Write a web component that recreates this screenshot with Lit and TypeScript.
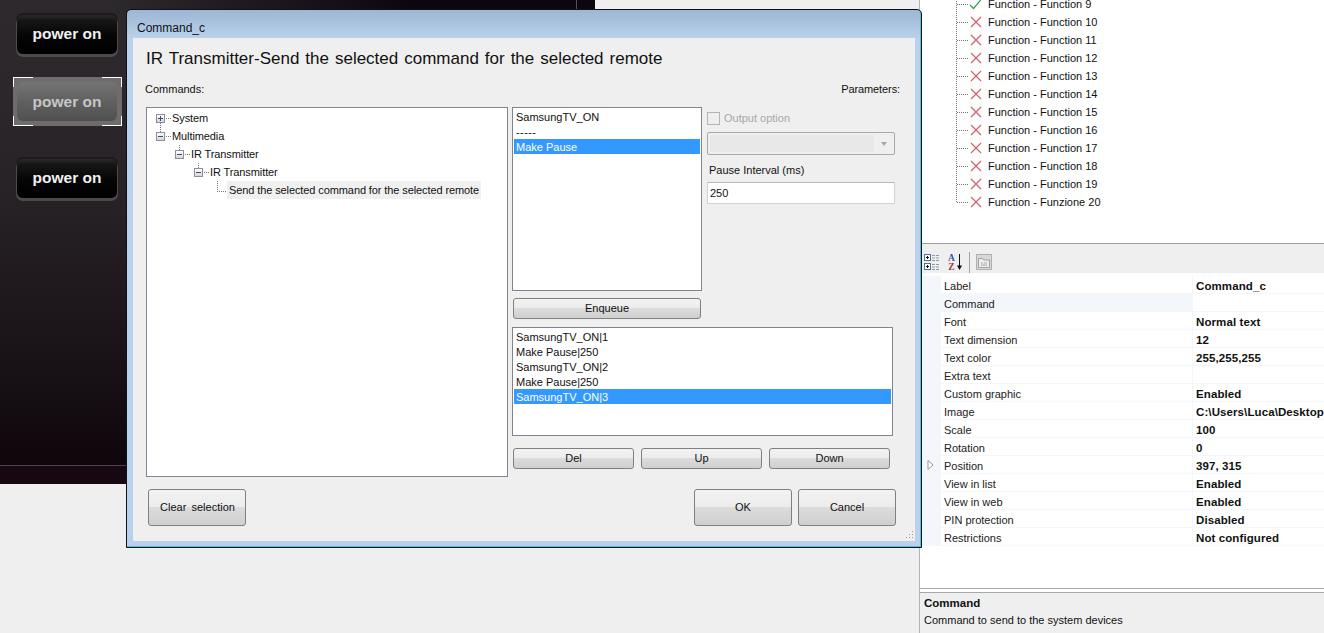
import { LitElement, html, css, svg } from "lit";
import { customElement } from "lit/decorators.js";

const FUNCS: [string, boolean][] = [
  ["Function - Function 9", true],
  ...Array.from({ length: 10 }, (_, i) => [`Function - Function ${i + 10}`, false] as [string, boolean]),
  ["Function - Funzione 20", false],
];

const PROPS: [string, string][] = [
  ["Label", "Command_c"], ["Command", ""], ["Font", "Normal text"], ["Text dimension", "12"],
  ["Text color", "255,255,255"], ["Extra text", ""], ["Custom graphic", "Enabled"],
  ["Image", "C:\\Users\\Luca\\Desktop"], ["Scale", "100"], ["Rotation", "0"], ["Position", "397, 315"],
  ["View in list", "Enabled"], ["View in web", "Enabled"], ["PIN protection", "Disabled"], ["Restrictions", "Not configured"],
];

const xIcon = svg`<svg width="14" height="14" viewBox="0 0 14 14"><path d="M2 2 12 12M12 2 2 12" stroke="#d2606c" stroke-width="1.2" fill="none"/></svg>`;
const checkIcon = svg`<svg width="14" height="14" viewBox="0 0 14 14"><path d="M1 8 4.5 11.5 12.5 2" stroke="#2e9e55" stroke-width="1.2" fill="none"/></svg>`;

@customElement("app-root")
export class AppRoot extends LitElement {
  static styles = css`
    :host { display: block; width: 1324px; height: 633px; position: relative; overflow: hidden; background: #efefef;
      font: 11px "Liberation Sans", Arial, sans-serif; color: #111; }
    .page { display: flex; height: 633px; }
    .work { width: 919px; flex: none; border-right: 1px solid #b4b4b4; }
    .canvas { width: 595px; height: 484px; position: relative; overflow: hidden;
      background:
        linear-gradient(90deg, transparent 18%, #0d0610 70%) top / 100% 12px no-repeat,
        linear-gradient(180deg, #2e292c 0, #2c272a 100px, #272225 200px, #1a1317 350px, #0e060b 465px, #170710 466px, #170710 100%); }
    .canvas::before { content: ""; position: absolute; left: 576px; top: 0; width: 1px; height: 100%; background: #55505a; }
    .canvas::after { content: ""; position: absolute; left: 0; top: 465px; width: 100%; height: 1px; background: #4a444a; }
    .pbtn { position: absolute; left: 17px; width: 100px; height: 39px; box-sizing: border-box; border-radius: 6px; padding-bottom: 1px;
      background: linear-gradient(180deg, #2a2a2a 0, #161616 14%, #050505 55%, #000 100%);
      box-shadow: 0 2px 0 1px #4e4a4c, 0 -1px 0 1px #1c1a1b;
      color: #f0f0f0; font: bold 15.5px "Liberation Sans", Arial, sans-serif; display: flex; align-items: center; justify-content: center; }
    .pwrap { position: absolute; left: 13px; top: 77px; width: 109px; height: 49px; box-sizing: border-box; background: #6e6c6d; padding: 5px 5px 5px 4px; }
    .pwrap .face { height: 39px; width: 100px; border-radius: 6px; box-sizing: border-box; display: flex; align-items: center; justify-content: center;
      background: linear-gradient(180deg, #747474 0, #606060 50%, #505050 100%); color: #c6c6c6; font: bold 15.5px "Liberation Sans", Arial, sans-serif; }
    .hd { position: absolute; width: 19px; height: 9px; border: 0 solid #fff; pointer-events: none; }
    .hd.nw { left: 0; top: 0; border-width: 1px 0 0 1px; }
    .hd.ne { right: 0; top: 0; border-width: 1px 1px 0 0; }
    .hd.sw { left: 0; bottom: 0; border-width: 0 0 1px 1px; }
    .hd.se { right: 0; bottom: 0; border-width: 0 1px 1px 0; }

    .right { flex: 1; min-width: 0; display: flex; flex-direction: column; background: #fff; }
    .ftree { height: 244px; flex: none; overflow: hidden; padding: 0 0 0 36px; box-sizing: border-box; border-bottom: 1px solid #a0a0a0; }
    .ftree-in { margin-top: -5px; border-left: 1px dotted #777; height: 207px; width: 300px; }
    .frow { height: 18px; display: flex; align-items: center; }
    .frow .dots { width: 11px; border-top: 1px dotted #777; margin-right: 1px; flex: none; }
    .frow svg { flex: none; margin-right: 5px; }
    .tools { height: 29px; flex: none; background: #efefef; display: flex; align-items: flex-start; padding: 10px 0 0 4px; box-sizing: border-box; }
    .tools .sep { width: 1px; height: 21px; background: #a4a4a4; margin: -2px 6px 0 5px; }
    .grid { flex: none; height: 315px; padding-top: 3px; box-sizing: border-box; }
    .prow { display: flex; height: 18px; box-sizing: border-box; }
    .prow .gut { width: 21px; flex: none; background: #f3f6fb; display: flex; align-items: center; justify-content: center; }
    .prow .nm { width: 251px; flex: none; padding-left: 3px; box-sizing: border-box; line-height: 20px; border-bottom: 1px solid #f3f6fb; color: #222; overflow: hidden; }
    .prow .val { flex: 1; border-left: 1px solid #f3f6fb; border-bottom: 1px solid #f3f6fb; padding-left: 3px; font-weight: bold; line-height: 20px; white-space: nowrap; color: #111; font-size: 11.5px; letter-spacing: .1px; overflow: hidden; }
    .prow.cur .nm { background: #f3f6fb; }
    .desc { flex: 1; border-top: 1px solid #a8a8a8; }
    .desc-in { margin-top: 3px; border-top: 1px solid #a8a8a8; background: #efefef; height: 100%; padding: 3px 4px; box-sizing: border-box; }
    .desc b { display: block; line-height: 14px; margin-bottom: 4px; font-size: 11.5px; }

    .dlg { position: absolute; left: 126px; top: 9px; width: 796px; height: 539px; box-sizing: border-box; border: 1px solid #111; border-radius: 5px 5px 0 0;
      background: linear-gradient(180deg, #9cb7d4 0, #b9d1ea 28px, #b9d1ea 100%); box-shadow: inset -1px -1px 0 0 #4fc0e8; padding: 0 6px 6px 6px; display: flex; flex-direction: column; }
    .dlg-t { height: 28px; flex: none; display: flex; align-items: center; padding: 7px 4px 0; font-size: 12px; box-sizing: border-box; color: #111; }
    .dlg-b { flex: 1; background: #efefef; padding: 0 19px 0 13px; position: relative; }
    h1 { margin: 0; font-weight: normal; font-size: 17px; line-height: 20px; padding-top: 11px; color: #111; word-spacing: 1.25px; }
    .caps { display: flex; justify-content: space-between; margin: 11px -4px 9px -1px; height: 18px; line-height: 18px; font-size: 11px; }
    .caps span:last-child { letter-spacing: -.1px; }
    .main { display: flex; gap: 4px; }
    .tree { width: 362px; height: 370px; flex: none; box-sizing: border-box; border: 1px solid #7f8490; background: #fff; padding-top: 1px; letter-spacing: -.1px; }
    .tr { height: 18px; display: flex; align-items: center; position: relative; white-space: nowrap; }
    .ex { width: 9px; height: 9px; box-sizing: border-box; border: 1px solid #8a8f99; background: linear-gradient(#fff, #d6d6d6); position: relative; flex: none; }
    .ex::before { content: ""; position: absolute; left: 1px; right: 1px; top: 3px; height: 1px; background: #3a4a80; }
    .ex.plus::after { content: ""; position: absolute; top: 1px; bottom: 1px; left: 3px; width: 1px; background: #3a4a80; }
    .d { width: 5px; margin: 0 1px; border-top: 1px dotted #777; flex: none; }
    .up { position: absolute; width: 0; top: 0; height: 5px; border-left: 1px dotted #777; }
    .up.sib { top: -4px; height: 9px; }
    .elbow { width: 9px; height: 11px; box-sizing: border-box; border-left: 1px dotted #777; border-bottom: 1px dotted #777; align-self: flex-start; flex: none; }
    .hl { background: #f0f0f0; line-height: 18px; padding: 0 2px; margin-left: 1px; }
    .side { width: 383px; flex: none; }
    .top { display: flex; gap: 5px; }
    .list { box-sizing: border-box; border: 1px solid #7f8490; background: #fff; padding: 1px; }
    .list div { height: 15px; line-height: 17px; padding-left: 2px; white-space: nowrap; overflow: hidden; }
    .list .on { background: #3399ff; color: #fff; }
    .list .dash { letter-spacing: .4px; }
    .cmds { width: 190px; height: 184px; }
    .params { width: 188px; }
    .opt { display: flex; align-items: center; gap: 4px; height: 14px; margin-top: 4px; color: #a8a8a8; }
    .opt i { width: 13px; height: 13px; box-sizing: border-box; border: 1px solid #b4b4b4; background: #efefef; flex: none; margin-top: 1px; }
    .opt span { margin-top: -1px; }
    .combo { height: 23px; box-sizing: border-box; border: 1px solid #a8a8a8; border-radius: 2px; margin-top: 7px; background: #efefef; padding: 2px; display: flex; align-items: stretch; }
    .combo u { display: block; width: 164px; background: #e8e8e8; }
    .combo s { display: block; margin: 7px 0 0 7px; width: 0; height: 0; border: 3.5px solid transparent; border-top: 4px solid #a8a8a8; }
    .lbl { margin: 8px 0 5px 2px; line-height: 14px; }
    .inp { height: 22px; box-sizing: border-box; border: 1px solid #d2d2d2; border-top-color: #b8b8b8; background: #fff; line-height: 20px; padding-left: 2px; }
    .btn { box-sizing: border-box; border: 1px solid #808080; border-radius: 3px; display: flex; align-items: center; justify-content: center; color: #111; padding-bottom: 1px;
      background: linear-gradient(180deg, #f2f2f2 0, #ececec 50%, #dcdcdc 50%, #cfcfcf 100%); }
    .enq { width: 188px; height: 21px; margin: 7px 0 8px 1px; }
    .queue { width: 381px; height: 109px; }
    .trio { display: flex; gap: 7px; margin: 12px 0 0 1px; }
    .trio .btn { width: 121px; height: 21px; }
    .foot { display: flex; margin-top: 12px; padding-left: 2px; gap: 6px; }
    .foot .btn { width: 98px; height: 37px; }
    .foot .sp { flex: 1; }
    .clear { word-spacing: 2px; padding-left: 1px; }
    .grip { position: absolute; right: 1px; bottom: 1px; }
  `;

  private treeRow(indent: number, label: string, plus: boolean, up: "" | "sib" | "near") {
    return html`<div class="tr" style="padding-left:${indent}px">
      ${up ? html`<span class="up ${up === "sib" ? "sib" : ""}" style="left:${indent + 4}px"></span>` : ""}
      <span class="ex ${plus ? "plus" : ""}"></span><span class="d"></span><span>${label}</span></div>`;
  }

  render() {
    return html`
      <div class="page">
        <div class="work">
          <div class="canvas">
            <div class="pbtn" style="top:15px">power on</div>
            <div class="pwrap"><div class="face">power on</div>
              <span class="hd nw"></span><span class="hd ne"></span><span class="hd sw"></span><span class="hd se"></span></div>
            <div class="pbtn" style="top:159px">power on</div>
          </div>
        </div>
        <div class="right">
          <div class="ftree"><div class="ftree-in">
            ${FUNCS.map(([t, ok]) => html`<div class="frow"><span class="dots"></span>${ok ? checkIcon : xIcon}<span>${t}</span></div>`)}
          </div></div>
          <div class="tools">
            <svg width="40" height="16" viewBox="0 0 40 16">
              <rect x=".5" y=".5" width="6" height="6" fill="#fff" stroke="#5a6f99"/><path d="M2 3.5h3M3.5 2v3" stroke="#113"/>
              <rect x=".5" y="9.5" width="6" height="6" fill="#fff" stroke="#5a6f99"/><path d="M2 12.5h3M3.5 11v3" stroke="#113"/>
              <path d="M8 1.5h8M8 4h8M8 6.5h8M8 10.5h8M8 13h8M8 15.5h8" stroke="#8f9aa8" stroke-dasharray="3 1"/>
              <text x="27.5" y="7" font-size="9.5" font-weight="bold" font-family="Liberation Serif" fill="#3355aa" text-anchor="middle">A</text>
              <text x="27.5" y="15.5" font-size="9.5" font-weight="bold" font-family="Liberation Serif" fill="#a83a3a" text-anchor="middle">Z</text>
              <path d="M35.5 0v13" stroke="#111"/><path d="M33 11.5h5L35.5 16z" fill="#111"/>
            </svg>
            <span class="sep"></span>
            <svg width="16" height="16" viewBox="0 0 16 16"><rect x=".5" y=".5" width="15" height="15" fill="#d8d8d8" stroke="#b0b0b0"/><path d="M2.5 4.5h4l1 1.5h6v7.5h-11z" fill="#eee" stroke="#a0a0a0"/><path d="M5 9h2M8 9h3M5 11h6" stroke="#aaa"/></svg>
          </div>
          <div class="grid">
            ${PROPS.map(([k, v], i) => html`<div class="prow ${i === 1 ? "cur" : ""}"><div class="gut">${k === "Position" ? html`<svg width="7" height="10" viewBox="0 0 7 10"><path d="M1 .5 6 5 1 9.5z" fill="#fff" stroke="#999"/></svg>` : ""}</div><div class="nm">${k}</div><div class="val">${v}</div></div>`)}
          </div>
          <div class="desc"><div class="desc-in"><b>Command</b>Command to send to the system devices</div></div>
        </div>
      </div>

      <div class="dlg">
        <div class="dlg-t">Command_c</div>
        <div class="dlg-b">
          <h1>IR Transmitter-Send the selected command for the selected remote</h1>
          <div class="caps"><span>Commands:</span><span>Parameters:</span></div>
          <div class="main">
            <div class="tree">
              ${this.treeRow(9, "System", true, "")}
              ${this.treeRow(9, "Multimedia", false, "sib")}
              ${this.treeRow(28, "IR Transmitter", false, "near")}
              ${this.treeRow(47, "IR Transmitter", false, "near")}
              <div class="tr" style="padding-left:70px"><span class="elbow"></span><span class="hl">Send the selected command for the selected remote</span></div>
            </div>
            <div class="side">
              <div class="top">
                <div class="list cmds"><div>SamsungTV_ON</div><div class="dash">-----</div><div class="on">Make Pause</div></div>
                <div class="params">
                  <div class="opt"><i></i><span>Output option</span></div>
                  <div class="combo"><u></u><s></s></div>
                  <div class="lbl">Pause Interval (ms)</div>
                  <div class="inp">250</div>
                </div>
              </div>
              <div class="btn enq">Enqueue</div>
              <div class="list queue">
                <div>SamsungTV_ON|1</div><div>Make Pause|250</div><div>SamsungTV_ON|2</div><div>Make Pause|250</div><div class="on">SamsungTV_ON|3</div>
              </div>
              <div class="trio"><div class="btn">Del</div><div class="btn">Up</div><div class="btn">Down</div></div>
            </div>
          </div>
          <div class="foot">
            <div class="btn clear">Clear selection</div><span class="sp"></span>
            <div class="btn">OK</div><div class="btn">Cancel</div>
          </div>
          <svg class="grip" width="10" height="10" viewBox="0 0 10 10"><path d="M8 1h1v1H8zM5 4h1v1H5zM8 4h1v1H8zM2 7h1v1H2zM5 7h1v1H5zM8 7h1v1H8z" fill="#9a9a9a"/></svg>
        </div>
      </div>
    `;
  }
}
